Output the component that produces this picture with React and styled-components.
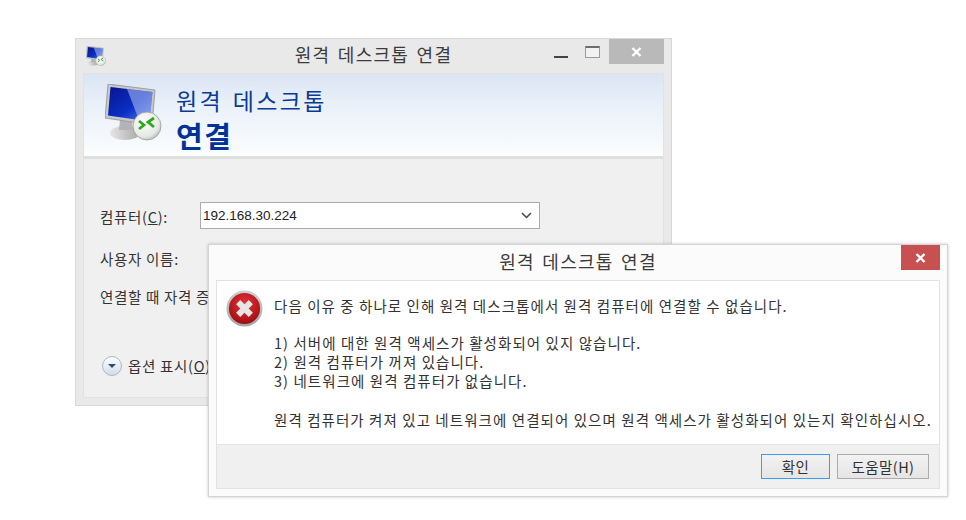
import React from 'react'
import styled, { createGlobalStyle } from 'styled-components'

const GlobalStyle = createGlobalStyle`
  html, body {
    margin: 0;
    padding: 0;
    background: #fff;
    font-family: "Noto Sans CJK KR", "Noto Sans", sans-serif;
  }
`

const Desktop = styled.div`
  position: relative;
  width: 966px;
  height: 520px;
  overflow: hidden;
  background: #fff;
`

const Window = styled.div`
  position: absolute;
  left: ${(p) => p.$x}px;
  top: ${(p) => p.$y}px;
  width: ${(p) => p.$w}px;
  height: ${(p) => p.$h}px;
  box-sizing: border-box;
  display: flex;
  flex-direction: column;
  background: ${(p) => p.$bg};
  border: 1px solid ${(p) => p.$line};
  padding: 0 7px 7px;
  ${(p) => p.$shadow && 'box-shadow: 0 0 3px rgba(0, 0, 0, 0.22);'}
`

const TitleBar = styled.div`
  position: relative;
  flex: none;
  height: ${(p) => p.$h}px;
  display: flex;
  align-items: center;
  justify-content: center;
`

const TitleText = styled.div`
  font-size: 18px;
  letter-spacing: 1.3px;
  word-spacing: 2px;
  color: #3c3c3c;
  margin-top: ${(p) => p.$offset}px;
`

const SmallIcon = styled.div`
  position: absolute;
  left: 3px;
  top: 7px;
  width: 20px;
  height: 20px;
`

const WindowButtons = styled.div`
  position: absolute;
  top: 0;
  right: 0;
  display: flex;
  align-items: flex-start;
`

const MinButton = styled.div`
  width: 14px;
  height: 2px;
  margin: 17px 17px 0 0;
  background: #444;
`

const MaxButton = styled.div`
  box-sizing: border-box;
  width: 15px;
  height: 12px;
  margin: 7px 9px 0 0;
  background: #f2f2f2;
  border: 1px solid #9a9a9a;
  border-top: 2px solid #6d6d6d;
`

const CloseButton = styled.div`
  width: ${(p) => p.$w}px;
  height: 25px;
  display: flex;
  align-items: center;
  justify-content: center;
  background: ${(p) => p.$bg};
`

const Panel = styled.div`
  flex: 1;
  display: flex;
  flex-direction: column;
  min-height: 0;
  border: 1px solid #e2e2e2;
`

const Banner = styled.div`
  flex: none;
  height: 85px;
  box-sizing: border-box;
  display: flex;
  align-items: flex-start;
  padding: 10px 0 0 21px;
  background: linear-gradient(#dae5f3 0%, #eaf1f9 40%, #fbfdfe 100%);
  border-bottom: 3px solid #dfdfdd;
`

const BannerTitles = styled.div`
  display: flex;
  flex-direction: column;
  margin: -10px 0 0 14px;
  color: #003399;
`

const BannerTop = styled.div`
  font-size: 23px;
  line-height: 30px;
  margin-top: 11px;
  letter-spacing: 2.4px;
  word-spacing: 2px;
  color: #0b3a96;
`

const BannerMain = styled.div`
  font-size: 29px;
  line-height: 34px;
  margin-top: 3px;
  font-weight: 700;
  letter-spacing: 1.5px;
`

const FormBody = styled.div`
  flex: 1;
  background: #f0f0f0;
  display: flex;
  flex-direction: column;
  padding: 42px 0 0 16px;
`

const FormRow = styled.div`
  display: flex;
  align-items: center;
  height: ${(p) => p.$h}px;
  margin-top: ${(p) => p.$top || 0}px;
`

const FormLabel = styled.div`
  width: ${(p) => p.$w || 100}px;
  flex: none;
  overflow: hidden;
  font-size: 14.5px;
  letter-spacing: 0.7px;
  white-space: nowrap;
  color: #333;
  margin-top: 2px;
`

const Key = styled.span`
  text-decoration: underline;
`

const Combo = styled.div`
  box-sizing: border-box;
  width: 340px;
  height: 27px;
  display: flex;
  align-items: center;
  justify-content: space-between;
  padding: 0 7px 0 2px;
  background: #fff;
  border: 1px solid #ababab;
  font-family: "Liberation Sans", sans-serif;
  font-size: 13.5px;
  color: #222;
`

const Options = styled.div`
  display: flex;
  align-items: center;
  gap: 6px;
  margin: 41px 0 0 2px;
  font-size: 14.5px;
  letter-spacing: 0.7px;
  color: #333;
  white-space: nowrap;
`

const OptionCircle = styled.div`
  width: 20px;
  height: 20px;
  box-sizing: border-box;
  border-radius: 50%;
  border: 1px solid #a9b6cf;
  background: linear-gradient(#fdfdfe, #d3dbe9);
  display: flex;
  align-items: center;
  justify-content: center;
`

const OptionArrow = styled.div`
  width: 0;
  height: 0;
  border-left: 4px solid transparent;
  border-right: 4px solid transparent;
  border-top: 4px solid #2c4a80;
`

const MessageArea = styled.div`
  flex: 1;
  display: flex;
  background: #fff;
  padding: 9px 0 0 9px;
`

const MessageIcon = styled.div`
  flex: none;
  width: 37px;
  height: 37px;
`

const MessageText = styled.div`
  margin-left: 11px;
  padding-top: 6px;
  font-size: 14.5px;
  line-height: 19px;
  letter-spacing: 1.07px;
  color: #333;
  white-space: nowrap;
`

const Paragraph = styled.p`
  margin: 0 0 ${(p) => p.$gap}px;
`

const Footer = styled.div`
  flex: none;
  height: 44px;
  box-sizing: border-box;
  display: flex;
  align-items: center;
  justify-content: flex-end;
  gap: 7px;
  padding-right: 10px;
  background: #f0f0f0;
  border-top: 1px solid #e3e3e3;
`

const DialogButton = styled.div`
  box-sizing: border-box;
  width: ${(p) => p.$w}px;
  height: 25px;
  display: flex;
  align-items: center;
  justify-content: center;
  font-size: 14.5px;
  letter-spacing: 0.4px;
  color: #333;
  background: linear-gradient(#f2f2f2, #e5e5e5);
  border: 1px solid ${(p) => (p.$focus ? '#3d9bf0' : '#acacac')};
`

const CloseX = () => (
  <svg width="11" height="10" viewBox="0 0 11 10">
    <path d="M1.5 1 L9.5 9 M9.5 1 L1.5 9" stroke="#fff" strokeWidth="2.4" fill="none" />
  </svg>
)

const Chevron = () => (
  <svg width="11" height="7" viewBox="0 0 11 7">
    <path d="M1 1 L5.5 5.5 L10 1" stroke="#444" strokeWidth="1.5" fill="none" />
  </svg>
)

// monitor with the green arrows badge, used big in the banner and small in the title
const RemoteIcon = ({ size }) => (
  <svg width={size} height={size} viewBox="0 0 57 57">
    <defs>
      <linearGradient id="screen" x1="0" y1="0" x2="1" y2="1">
        <stop offset="0" stopColor="#08148c" />
        <stop offset="0.55" stopColor="#0a2fc4" />
        <stop offset="1" stopColor="#5f7fe8" />
      </linearGradient>
      <radialGradient id="badge" cx="0.4" cy="0.35" r="0.75">
        <stop offset="0" stopColor="#ffffff" />
        <stop offset="0.7" stopColor="#e6e8e4" />
        <stop offset="1" stopColor="#a9ada6" />
      </radialGradient>
      <linearGradient id="foot" x1="0" y1="0" x2="1" y2="0">
        <stop offset="0" stopColor="#e6e6e6" />
        <stop offset="1" stopColor="#a8a8a8" />
      </linearGradient>
    </defs>
    <ellipse cx="20" cy="49" rx="15" ry="7" fill="url(#foot)" />
    <path d="M15 36 L27 38 L28 46 L14 46 Z" fill="#b4b4b4" />
    <path d="M3 0 L50 6 L47 41 L0 34 Z" fill="#c6c8ca" stroke="#8f9194" strokeWidth="0.8" />
    <path d="M5.5 3 L47.5 8 L44.5 37.5 L3 31.5 Z" fill="url(#screen)" />
    <path d="M22 5 L47.5 8 L44.5 37.5 L34 36 Z" fill="#b3c4f6" opacity="0.55" />
    <circle cx="42" cy="42" r="14" fill="url(#badge)" stroke="#9a9d98" strokeWidth="0.8" />
    <path d="M34 37 L39 41 L34 45 M49 34 L43 38 L49 43" stroke="#2fa81e" strokeWidth="2.8" fill="none" />
  </svg>
)

const ErrorIcon = () => (
  <svg width="37" height="37" viewBox="0 0 38 38">
    <defs>
      <radialGradient id="errFill" cx="0.5" cy="0.35" r="0.7">
        <stop offset="0" stopColor="#e2353a" />
        <stop offset="0.7" stopColor="#b5161d" />
        <stop offset="1" stopColor="#8a0d12" />
      </radialGradient>
      <linearGradient id="errRim" x1="0" y1="0" x2="0" y2="1">
        <stop offset="0" stopColor="#d0d0d0" />
        <stop offset="1" stopColor="#a5a5a5" />
      </linearGradient>
    </defs>
    <circle cx="19" cy="19" r="18.5" fill="url(#errRim)" />
    <circle cx="19" cy="19" r="16" fill="url(#errFill)" />
    <path d="M12.5 12.5 L25.5 25.5 M25.5 12.5 L12.5 25.5" stroke="#e6e6e6" strokeWidth="6" fill="none" />
  </svg>
)

const App = () => (
  <Desktop>
    <GlobalStyle />
    <Window $x={75} $y={38} $w={597} $h={368} $bg="#e9e9e9" $line="#d8d8d8">
      <TitleBar $h={34}>
        <SmallIcon>
          <RemoteIcon size={20} />
        </SmallIcon>
        <TitleText $offset={-5}>원격 데스크톱 연결</TitleText>
        <WindowButtons>
          <MinButton />
          <MaxButton />
          <CloseButton $w={55} $bg="#b9b9b9">
            <CloseX />
          </CloseButton>
        </WindowButtons>
      </TitleBar>
      <Panel>
        <Banner>
          <RemoteIcon size={57} />
          <BannerTitles>
            <BannerTop>원격 데스크톱</BannerTop>
            <BannerMain>연결</BannerMain>
          </BannerTitles>
        </Banner>
        <FormBody>
          <FormRow $h={29}>
            <FormLabel>컴퓨터(<Key>C</Key>):</FormLabel>
            <Combo>
              192.168.30.224
              <Chevron />
            </Combo>
          </FormRow>
          <FormRow $h={38} $top={8}>
            <FormLabel>사용자 이름:</FormLabel>
          </FormRow>
          <FormRow $h={38}>
            <FormLabel $w={108}>연결할 때 자격 증</FormLabel>
          </FormRow>
          <Options>
            <OptionCircle>
              <OptionArrow />
            </OptionCircle>
            <span>옵션 표시(<Key>O</Key>)</span>
          </Options>
        </FormBody>
      </Panel>
    </Window>

    <Window $x={208} $y={244} $w={740} $h={253} $bg="#fbfbfb" $line="#d4d4d4" $shadow>
      <TitleBar $h={35}>
        <TitleText $offset={-4}>원격 데스크톱 연결</TitleText>
        <WindowButtons>
          <CloseButton $w={39} $bg="#c75050">
            <CloseX />
          </CloseButton>
        </WindowButtons>
      </TitleBar>
      <Panel>
        <MessageArea>
          <MessageIcon>
            <ErrorIcon />
          </MessageIcon>
          <MessageText>
            <Paragraph $gap={18}>다음 이유 중 하나로 인해 원격 데스크톱에서 원격 컴퓨터에 연결할 수 없습니다.</Paragraph>
            <Paragraph $gap={0}>1) 서버에 대한 원격 액세스가 활성화되어 있지 않습니다.</Paragraph>
            <Paragraph $gap={0}>2) 원격 컴퓨터가 꺼져 있습니다.</Paragraph>
            <Paragraph $gap={20}>3) 네트워크에 원격 컴퓨터가 없습니다.</Paragraph>
            <Paragraph $gap={0}>원격 컴퓨터가 켜져 있고 네트워크에 연결되어 있으며 원격 액세스가 활성화되어 있는지 확인하십시오.</Paragraph>
          </MessageText>
        </MessageArea>
        <Footer>
          <DialogButton $w={69} $focus>확인</DialogButton>
          <DialogButton $w={92}>도움말(H)</DialogButton>
        </Footer>
      </Panel>
    </Window>
  </Desktop>
)

export default App
